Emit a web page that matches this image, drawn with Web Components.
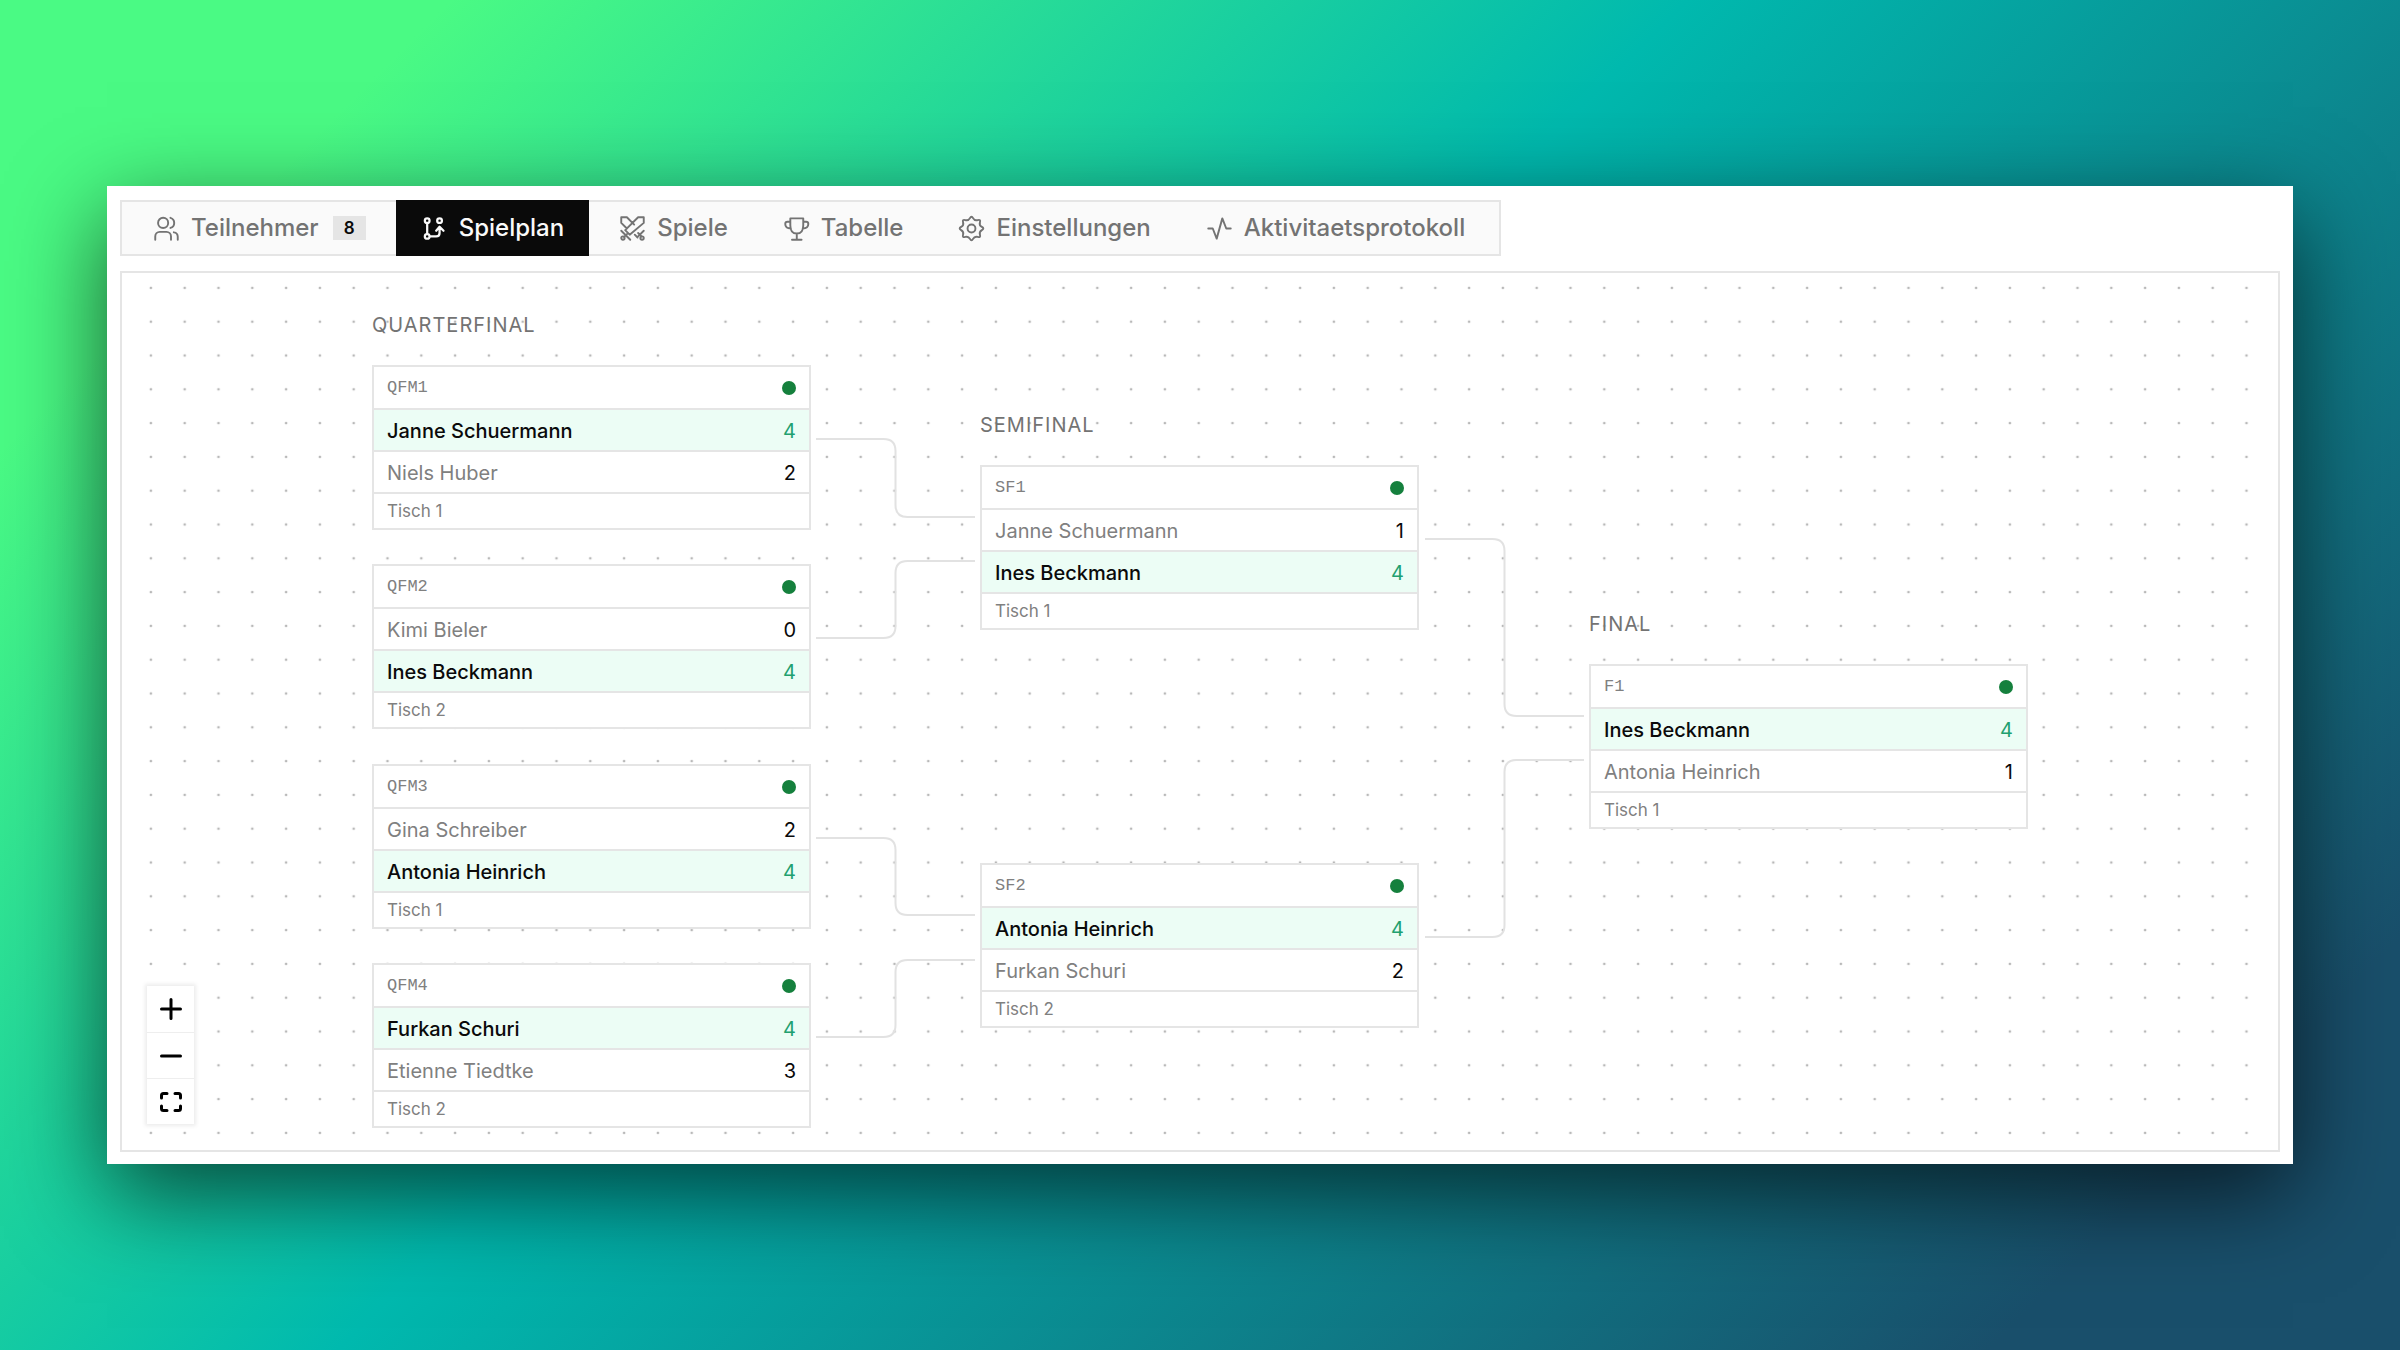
<!DOCTYPE html>
<html lang="de">
<head>
<meta charset="utf-8">
<title>Spielplan</title>
<style>
  html, body { margin: 0; }
  body {
    min-height: 100vh;
    display: flex;
    align-items: center;
    font-family: Inter, "Liberation Sans", sans-serif;
    background: linear-gradient(135deg, #4afa84 12%, #00b9ae 45%, #194f6b 89%);
    --line: #e5e5e5;
    --muted: #737373;
    --ink: #0a0a0a;
  }
  tournament-window { flex: 1; margin: 0 107px; }
</style>
</head>
<body>
<tournament-window>
  <tab-bar slot="tabs">
    <tab-item icon="users" count="8">Teilnehmer</tab-item>
    <tab-item icon="bracket" active>Spielplan</tab-item>
    <tab-item icon="swords">Spiele</tab-item>
    <tab-item icon="trophy">Tabelle</tab-item>
    <tab-item icon="gear">Einstellungen</tab-item>
    <tab-item icon="activity">Aktivitaetsprotokoll</tab-item>
  </tab-bar>
  <bracket-canvas></bracket-canvas>
</tournament-window>

<script>
// eight rounded teeth around the centre of a 24x24 box
function gearPath() {
  const points = [];
  for (let i = 0; i < 16; i++) {
    const radius = i % 2 ? 7.2 : 11.8;
    const angle = (i * Math.PI) / 8;
    points.push([12 + radius * Math.sin(angle), 12 - radius * Math.cos(angle)]);
  }
  const mid = (a, b) => `${(a[0] + b[0]) / 2} ${(a[1] + b[1]) / 2}`;
  const curves = points.map((point, i) => `Q${point.join(' ')} ${mid(point, points[(i + 1) % 16])}`);
  return `M${mid(points[15], points[0])}${curves.join('')}Z`;
}

const icons = {
  users: '<circle cx="9" cy="7" r="4.500"/><path d="M15.500 11.500a4.700 4.700 0 0 0 0-9M2 22v-3a4 4 0 0 1 4-4h6a4 4 0 0 1 4 4v3M18.500 15.400a4 4 0 0 1 3.500 4V22"/>',
  bracket: '<g stroke-width="2"><circle cx="5.500" cy="5" r="2.100"/><circle cx="16.500" cy="5" r="2.100"/><circle cx="5.500" cy="19" r="2.100"/><path d="M5.500 7.500v9M8 19h5.500q3 0 3-3v-4.500M13.500 14l3-3.500 3.500 3.500"/></g>',
  swords: '<path d="M17 2h5v5L9.500 17.500l-4-4zM2 14l8 8M7.500 16.500l-3 3M13.500 8.500 7 2H2v5l5 5M14 17.500l2.500 2.500M22 14l-5 5M17 16l3 3"/><circle cx="3.500" cy="20.500" r="1.500"/><circle cx="20.500" cy="20.500" r="1.500"/>',
  trophy: '<path d="M6.500 3h11.500v6q0 7.500-5.750 7.500T6.500 9zM6.500 6H4a2 2 0 0 0-2 2c0 2.500 2 4 5 4M18 6h2.500a2 2 0 0 1 2 2c0 2.500-2 4-5 4M12.250 16.500V22M8 22h8.500"/>',
  gear: `<circle cx="12" cy="12" r="3.500"/><path d="${gearPath()}"/>`,
  activity: '<path d="M2 12h4l3.500 9 5-18 3.500 9H22"/>'
};

const matches = [
  { id: 'QFM1', x: 0, y: 55, table: 1, players: [['Janne Schuermann', 4], ['Niels Huber', 2]] },
  { id: 'QFM2', x: 0, y: 254, table: 2, players: [['Kimi Bieler', 0], ['Ines Beckmann', 4]] },
  { id: 'QFM3', x: 0, y: 454, table: 1, players: [['Gina Schreiber', 2], ['Antonia Heinrich', 4]] },
  { id: 'QFM4', x: 0, y: 653, table: 2, players: [['Furkan Schuri', 4], ['Etienne Tiedtke', 3]] },
  { id: 'SF1', x: 608, y: 155, table: 1, players: [['Janne Schuermann', 1], ['Ines Beckmann', 4]] },
  { id: 'SF2', x: 608, y: 553, table: 2, players: [['Antonia Heinrich', 4], ['Furkan Schuri', 2]] },
  { id: 'F1', x: 1217, y: 354, table: 1, players: [['Ines Beckmann', 4], ['Antonia Heinrich', 1]] }
];

const rounds = [
  { name: 'Quarterfinal', x: 0, y: 0 },
  { name: 'Semifinal', x: 608, y: 100 },
  { name: 'Final', x: 1217, y: 299 }
];

// source x/y, target x/y
const edges = [
  [444, 129, 603, 207],
  [444, 328, 603, 251],
  [444, 528, 603, 605],
  [444, 727, 603, 650],
  [1053, 229, 1212, 406],
  [1053, 627, 1212, 450]
];

function edgePath([x1, y1, x2, y2]) {
  const mid = (x1 + x2) / 2;
  const r = y2 > y1 ? 12 : -12;
  return `M${x1} ${y1}H${mid - 12}Q${mid} ${y1} ${mid} ${y1 + r}V${y2 - r}Q${mid} ${y2} ${mid + 12} ${y2}H${x2}`;
}

class TournamentWindow extends HTMLElement {
  constructor() {
    super();
    this.attachShadow({ mode: 'open' }).innerHTML = `
      <style>
        :host {
          display: flex;
          flex-direction: column;
          gap: 15px;
          box-sizing: border-box;
          min-width: 0;
          padding: 14px 13px 12px;
          background: #fff;
          box-shadow: 0 30px 90px rgba(0, 0, 0, 0.65);
        }
      </style>
      <slot name="tabs"></slot>
      <slot></slot>
    `;
  }
}

class TabBar extends HTMLElement {
  constructor() {
    super();
    this.attachShadow({ mode: 'open' }).innerHTML = `
      <style>
        :host { display: flex; }
        nav {
          display: flex;
          gap: 5px;
          height: 52px;
          padding: 0 9px 0 6px;
          border: 2px solid var(--line);
          background: #fafafa;
        }
      </style>
      <nav><slot></slot></nav>
    `;
  }
}

class TabItem extends HTMLElement {
  constructor() {
    super();
    this.attachShadow({ mode: 'open' });
  }

  connectedCallback() {
    const count = this.getAttribute('count');
    this.shadowRoot.innerHTML = `
      <style>
        :host { display: flex; margin: -2px 0; }
        button {
          display: flex;
          align-items: center;
          gap: 11px;
          padding: 0 25px;
          border: 0;
          background: none;
          color: var(--muted);
          font: 500 24px/32px Inter, "Liberation Sans", sans-serif;
          white-space: nowrap;
        }
        :host([active]) button { background: var(--ink); color: #fafafa; }
        svg {
          width: 27px;
          height: 27px;
          fill: none;
          stroke: currentColor;
          stroke-width: 1.7;
          stroke-linecap: round;
          stroke-linejoin: round;
        }
        .count {
          width: 33px;
          margin-left: 3px;
          background: var(--line);
          color: var(--ink);
          font-size: 17px;
          font-weight: 600;
          line-height: 24px;
          text-align: center;
        }
      </style>
      <button type="button">
        <svg viewBox="0 0 24 24" aria-hidden="true">${icons[this.getAttribute('icon')]}</svg>
        <slot></slot>
        ${count ? `<span class="count">${count}</span>` : ''}
      </button>
    `;
  }
}

class MatchCard extends HTMLElement {
  constructor() {
    super();
    this.attachShadow({ mode: 'open' });
  }

  set match(match) {
    const best = Math.max(...match.players.map(player => player[1]));
    this.shadowRoot.innerHTML = `
      <style>
        :host {
          display: block;
          box-sizing: border-box;
          width: 439px;
          border: 2px solid var(--line);
          background: #fff;
          color: #808080;
        }
        header, .player {
          display: flex;
          align-items: center;
          justify-content: space-between;
          box-sizing: border-box;
          padding: 0 13px;
          border-bottom: 2px solid var(--line);
        }
        header {
          height: 43px;
          font: 17px/24px "Liberation Mono", monospace;
        }
        .status {
          width: 14px;
          height: 14px;
          border-radius: 50%;
          background: #15803d;
        }
        .player {
          height: 42px;
          padding-top: 2px;
          font-size: 20px;
          line-height: 28px;
        }
        .score { color: var(--ink); }
        .winner { background: #ecfdf5; color: var(--ink); font-weight: 500; }
        .winner .score { color: #22a06f; font-weight: 400; }
        footer { padding: 0 13px; font-size: 17px; line-height: 34px; }
      </style>
      <header><span>${match.id}</span><span class="status"></span></header>
      ${match.players.map(([name, score]) => `
        <div class="player ${score === best ? 'winner' : ''}">
          <span>${name}</span>
          <span class="score">${score}</span>
        </div>
      `).join('')}
      <footer>Tisch ${match.table}</footer>
    `;
  }
}

class ZoomControls extends HTMLElement {
  constructor() {
    super();
    this.attachShadow({ mode: 'open' }).innerHTML = `
      <style>
        :host {
          display: flex;
          flex-direction: column;
          background: #fff;
          box-shadow: 0 0 4px 2px rgba(0, 0, 0, 0.08);
        }
        button {
          display: flex;
          align-items: center;
          justify-content: center;
          width: 47px;
          height: 46px;
          padding: 0;
          border: 0;
          background: #fff;
        }
        button + button { border-top: 1px solid #eee; }
        svg {
          width: 22px;
          height: 22px;
          fill: none;
          stroke: #000;
          stroke-width: 3;
          stroke-linecap: round;
        }
      </style>
      <button type="button" aria-label="+"><svg viewBox="0 0 22 22"><path d="M1.500 11h19M11 1.500v19"/></svg></button>
      <button type="button" aria-label="-"><svg viewBox="0 0 22 22"><path d="M1.500 11h19"/></svg></button>
      <button type="button" aria-label="[ ]"><svg viewBox="0 0 22 22"><path d="M1.500 7V4.500q0-2 2-2H7M15 2.500h3.500q2 0 2 2V7M20.500 15v2.500q0 2-2 2H15M7 19.500H3.500q-2 0-2-2V15"/></svg></button>
    `;
  }
}

class BracketCanvas extends HTMLElement {
  constructor() {
    super();
    this.attachShadow({ mode: 'open' }).innerHTML = `
      <style>
        :host {
          display: flex;
          justify-content: center;
          position: relative;
          padding: 37px 0 22px;
          border: 2px solid var(--line);
          overflow: hidden;
        }
        .dots {
          position: absolute;
          inset: 0;
          width: 100%;
          height: 100%;
        }
        .stage {
          position: relative;
          width: 1656px;
          height: 818px;
        }
        .edges {
          position: absolute;
          inset: 0;
          width: 100%;
          height: 100%;
          fill: none;
          stroke: #e2e2e2;
          stroke-width: 2;
        }
        h2 {
          position: absolute;
          margin: 0;
          color: var(--muted);
          font-size: 20px;
          font-weight: 400;
          line-height: 30px;
          letter-spacing: 1px;
          text-transform: uppercase;
        }
        match-card { position: absolute; }
        zoom-controls {
          position: absolute;
          left: 25px;
          bottom: 26px;
        }
      </style>
      <svg class="dots" aria-hidden="true">
        <pattern id="grid" width="20" height="20" patternUnits="userSpaceOnUse" patternTransform="translate(12 -2) scale(1.69)">
          <circle cx="10" cy="10" r="0.800" fill="#b8b8b8"/>
        </pattern>
        <rect width="100%" height="100%" fill="url(#grid)"/>
      </svg>
      <div class="stage">
        <svg class="edges" aria-hidden="true">${edges.map(edge => `<path d="${edgePath(edge)}"/>`).join('')}</svg>
        ${rounds.map(round => `<h2 style="left: ${round.x}px; top: ${round.y}px">${round.name}</h2>`).join('')}
      </div>
      <zoom-controls></zoom-controls>
    `;
    const stage = this.shadowRoot.querySelector('.stage');
    matches.forEach(match => {
      const card = document.createElement('match-card');
      card.match = match;
      card.style.left = `${match.x}px`;
      card.style.top = `${match.y}px`;
      stage.append(card);
    });
  }
}

customElements.define('match-card', MatchCard);
customElements.define('zoom-controls', ZoomControls);
customElements.define('bracket-canvas', BracketCanvas);
customElements.define('tab-item', TabItem);
customElements.define('tab-bar', TabBar);
customElements.define('tournament-window', TournamentWindow);
</script>
</body>
</html>
